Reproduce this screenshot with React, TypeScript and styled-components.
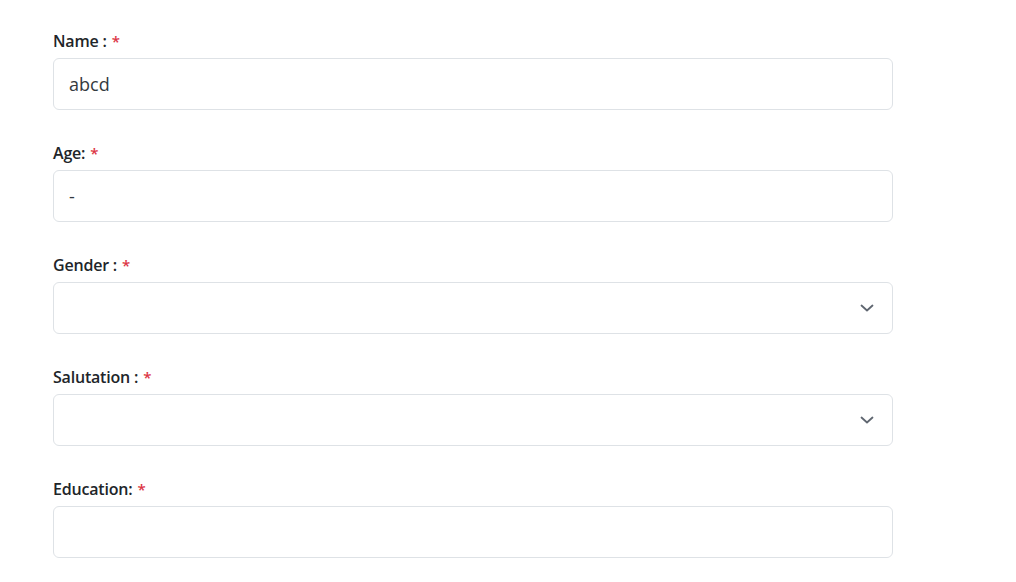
import styled, { createGlobalStyle } from "styled-components";

const GlobalStyle = createGlobalStyle`
  body {
    margin: 0;
    background: #ffffff;
    font-family: "Open Sans", "Noto Sans", "Liberation Sans", sans-serif;
    color: #212529;
  }
`;

const Form = styled.form`
  padding: 30px 0 0 53px;
  width: 840px;
  display: flex;
  flex-direction: column;
  gap: 32px;
`;

const Field = styled.div`
  display: flex;
  flex-direction: column;
  gap: 6px;
`;

const Label = styled.label`
  font-size: 16px;
  font-weight: 600;
  line-height: 22px;
  color: #212529;
  letter-spacing: -0.2px;
`;

const Required = styled.span`
  color: #dc3545;
  margin-left: 5px;
  font-size: 15px;
`;

const InputBox = styled.div`
  position: relative;
  height: 52px;
  box-sizing: border-box;
  border: 1px solid #dee2e6;
  border-radius: 6px;
  display: flex;
  align-items: center;
  padding: 0 15px;
  font-size: 18px;
  color: #343a40;
`;

const Chevron = styled.svg`
  position: absolute;
  right: 17px;
  top: 50%;
  transform: translateY(-50%);
`;

type FieldProps = {
  label: string;
  value?: string;
  select?: boolean;
};

const FormField = ({ label, value, select }: FieldProps) => (
  <Field>
    <Label>
      {label}
      <Required>*</Required>
    </Label>
    <InputBox>
      {value}
      {select && (
        <Chevron width="16" height="16" viewBox="0 0 16 16" fill="none">
          <path d="M2.5 5.5l5.5 5 5.5-5" stroke="#5f6670" strokeWidth="1.8" strokeLinecap="round" strokeLinejoin="round" />
        </Chevron>
      )}
    </InputBox>
  </Field>
);

export default function App() {
  return (
    <>
      <GlobalStyle />
      <Form>
        <FormField label="Name :" value="abcd" />
        <FormField label="Age:" value="-" />
        <FormField label="Gender :" select />
        <FormField label="Salutation :" select />
        <FormField label="Education:" />
      </Form>
    </>
  );
}
